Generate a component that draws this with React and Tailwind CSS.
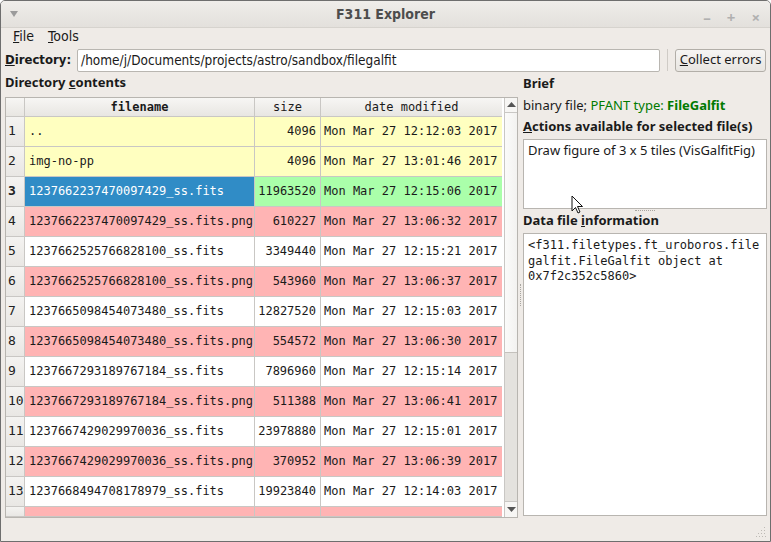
import React from 'react';

const rows = [
    { n: 1, name: '..', size: '4096', date: 'Mon Mar 27 12:12:03 2017', kind: 'dir' },
    { n: 2, name: 'img-no-pp', size: '4096', date: 'Mon Mar 27 13:01:46 2017', kind: 'dir' },
    { n: 3, name: '1237662237470097429_ss.fits', size: '11963520', date: 'Mon Mar 27 12:15:06 2017', kind: 'sel' },
    { n: 4, name: '1237662237470097429_ss.fits.png', size: '610227', date: 'Mon Mar 27 13:06:32 2017', kind: 'png' },
    { n: 5, name: '1237662525766828100_ss.fits', size: '3349440', date: 'Mon Mar 27 12:15:21 2017', kind: 'fits' },
    { n: 6, name: '1237662525766828100_ss.fits.png', size: '543960', date: 'Mon Mar 27 13:06:37 2017', kind: 'png' },
    { n: 7, name: '1237665098454073480_ss.fits', size: '12827520', date: 'Mon Mar 27 12:15:03 2017', kind: 'fits' },
    { n: 8, name: '1237665098454073480_ss.fits.png', size: '554572', date: 'Mon Mar 27 13:06:30 2017', kind: 'png' },
    { n: 9, name: '1237667293189767184_ss.fits', size: '7896960', date: 'Mon Mar 27 12:15:14 2017', kind: 'fits' },
    { n: 10, name: '1237667293189767184_ss.fits.png', size: '511388', date: 'Mon Mar 27 13:06:41 2017', kind: 'png' },
    { n: 11, name: '1237667429029970036_ss.fits', size: '23978880', date: 'Mon Mar 27 12:15:01 2017', kind: 'fits' },
    { n: 12, name: '1237667429029970036_ss.fits.png', size: '370952', date: 'Mon Mar 27 13:06:39 2017', kind: 'png' },
    { n: 13, name: '1237668494708178979_ss.fits', size: '19923840', date: 'Mon Mar 27 12:14:03 2017', kind: 'fits' },
    { n: '', name: '', size: '', date: '', kind: 'png' },
];

const bg = {
    dir: 'bg-[#ffffc0]',
    sel: 'bg-[#aaffaa]',
    png: 'bg-[#ffb4b4]',
    fits: 'bg-white',
};

const Row = ({ r, last }) => (
    <div className={`flex ${last ? 'h-[10px]' : 'h-[30px]'} border-b border-[#c9c7c4]`}>
        <div className={`w-[19px] shrink-0 flex items-center pl-[2px] border-r border-[#c9c7c4] bg-gradient-to-b from-[#f4f3f1] to-[#e9e7e4] text-[13px] text-[#222] ${r.kind === 'sel' ? 'font-bold' : ''}`}>
            {r.n}
        </div>
        <div className={`w-[230px] shrink-0 flex items-center pl-[4px] border-r border-[#c9c7c4] whitespace-pre ${r.kind === 'sel' ? 'bg-[#308cc6] text-white' : bg[r.kind]}`}>
            {r.name}
        </div>
        <div className={`w-[66px] shrink-0 flex items-center justify-end pr-[4px] border-r border-[#c9c7c4] ${bg[r.kind]}`}>
            {r.size}
        </div>
        <div className={`w-[181px] shrink-0 flex items-center pl-[3px] ${bg[r.kind]}`}>
            {r.date}
        </div>
    </div>
);

const Arrow = ({ up }) => (
    <svg width="9" height="5" viewBox="0 0 9 5">
        {up ? <path d="M0 5 L4.5 0 L9 5 Z" fill="#555" /> : <path d="M0 0 L4.5 5 L9 0 Z" fill="#555" />}
    </svg>
);

export default function App() {
    return (
        <div className="w-[771px] h-[542px] flex flex-col bg-[#efebe7] border border-[#6e6e6e] rounded-t-[5px] overflow-hidden text-[13px] text-[#1a1a1a] font-['Noto_Sans',sans-serif] relative">

            {/* title bar */}
            <div className="h-[27px] shrink-0 flex items-center relative bg-gradient-to-b from-[#efedea] to-[#e3e0dc] border-b border-[#d6d3ce]">
                <div className="absolute left-[9px] top-[10px]">
                    <svg width="8" height="6" viewBox="0 0 8 6"><path d="M0 0 L8 0 L4 6 Z" fill="#9b9b9b" /></svg>
                </div>
                <div className="flex-1 text-center font-bold text-[14px] text-[#4d4d4d] font-['DejaVu_Sans',sans-serif] font-stretch-condensed">F311 Explorer</div>
                <div className="absolute right-[10px] top-[5px] flex gap-[16px] text-[#b0b0b0] text-[15px] font-bold">
                    <span>–</span><span>+</span><span>×</span>
                </div>
            </div>

            {/* menu */}
            <div className="h-[17px] shrink-0 flex items-center gap-[14px] pl-[12px] text-[14px] font-['DejaVu_Sans',sans-serif] font-stretch-condensed">
                <span><u>F</u>ile</span>
                <span><u>T</u>ools</span>
            </div>

            {/* directory row */}
            <div className="h-[26px] mt-[2px] shrink-0 flex items-center px-[4px]">
                <span className="font-bold font-['DejaVu_Sans',sans-serif] font-stretch-condensed mr-[6px]"><u>D</u>irectory:</span>
                <div className="w-[585px] h-[23px] bg-white border border-[#b9b6b1] rounded-[2px] flex items-center pl-[3px] text-[13.5px] font-['DejaVu_Sans',sans-serif] font-stretch-condensed">
                    /home/j/Documents/projects/astro/sandbox/filegalfit
                </div>
                <div className="w-px h-[22px] bg-[#cfcbc6] ml-[7px] mr-[7px]" />
                <div className="w-[91px] h-[23px] border border-[#b2aea8] rounded-[3px] bg-gradient-to-b from-[#f6f5f3] to-[#e8e5e1] flex items-center justify-center">
                    <span><u>C</u>ollect errors</span>
                </div>
            </div>

            {/* main area */}
            <div className="flex-1 flex min-h-0 pl-[4px] pr-[3px]">
                {/* left */}
                <div className="w-[513px] shrink-0 flex flex-col">
                    <div className="h-[22px] flex items-center font-bold"><span>Directory <u>c</u>ontents</span></div>
                    <div className="mt-[4px] flex border border-[#b8b5b0] bg-white">
                        <div className="w-[496px] font-['DejaVu_Sans_Mono',monospace] text-[12px]">
                            <div className="flex h-[19px] border-b border-[#c9c7c4] bg-gradient-to-b from-[#f7f6f4] to-[#e8e6e2]">
                                <div className="w-[19px] border-r border-[#c9c7c4]" />
                                <div className="w-[230px] border-r border-[#c9c7c4] flex items-center justify-center font-bold">filename</div>
                                <div className="w-[66px] border-r border-[#c9c7c4] flex items-center justify-center">size</div>
                                <div className="w-[181px] flex items-center justify-center">date modified</div>
                            </div>
                            {rows.map((r, i) => (
                                <Row key={i} r={r} last={i === rows.length - 1} />
                            ))}
                        </div>
                        {/* scrollbar */}
                        <div className="w-[16px] ml-[2px] border-l border-[#c9c7c4] bg-[#e4e2de] flex flex-col">
                            <div className="h-[15px] flex items-center justify-center bg-[#f7f6f4] border-b border-[#c9c7c4]"><Arrow up /></div>
                            <div className="h-[240px] bg-gradient-to-r from-[#fbfbfa] to-[#f3f2f0] border-b border-[#c4c1bc]" />
                            <div className="flex-1" />
                            <div className="h-[16px] flex items-center justify-center bg-[#f7f6f4] border-t border-[#c9c7c4]"><Arrow /></div>
                        </div>
                    </div>
                </div>

                {/* splitter */}
                <div className="w-[5px] shrink-0 flex items-center justify-center">
                    <div className="h-[22px] w-px border-l border-dotted border-[#a8a5a0]" />
                </div>

                {/* right */}
                <div className="flex-1 min-w-0 flex flex-col">
                    <div className="h-[22px] flex items-center font-bold">Brief</div>
                    <div className="h-[21px] flex items-center">
                        binary file;&nbsp;<span className="text-[#007a00]">PFANT type: <b>FileGalfit</b></span>
                    </div>
                    <div className="h-[21px] flex items-center font-bold"><span><u>A</u>ctions available for selected file(s)</span></div>
                    <div className="mt-[2px] h-[70px] bg-white border border-[#b8b5b0] px-[4px] pt-[1px]">
                        Draw figure of 3 x 5 tiles (VisGalfitFig)
                    </div>
                    <div className="h-[4px] flex justify-center">
                        <div className="w-[20px] border-t border-dotted border-[#a8a5a0] mt-[1px]" />
                    </div>
                    <div className="h-[16px] flex items-center font-bold"><span>Data file <u>i</u>nformation</span></div>
                    <div className="mt-[4px] h-[283px] bg-white border border-[#b8b5b0] px-[4px] pt-[4px] font-['DejaVu_Sans_Mono',monospace] text-[12px] leading-[15.5px] break-words">
                        &lt;f311.filetypes.ft_uroboros.filegalfit.FileGalfit object at 0x7f2c352c5860&gt;
                    </div>
                </div>
            </div>

            {/* status bar */}
            <div className="h-[25px] shrink-0 relative">
                <div className="absolute right-[4px] bottom-[4px]">
                    <svg width="10" height="10" viewBox="0 0 10 10" fill="#bdbab5">
                        <rect x="8" y="0" width="1" height="1" />
                        <rect x="5" y="3" width="1" height="1" /><rect x="8" y="3" width="1" height="1" />
                        <rect x="2" y="6" width="1" height="1" /><rect x="5" y="6" width="1" height="1" /><rect x="8" y="6" width="1" height="1" />
                        <rect x="0" y="9" width="1" height="1" /><rect x="3" y="9" width="1" height="1" /><rect x="6" y="9" width="1" height="1" /><rect x="9" y="9" width="1" height="1" />
                    </svg>
                </div>
            </div>

            {/* mouse pointer */}
            <div className="absolute left-[570px] top-[194px]">
                <svg width="13" height="19" viewBox="0 0 13 19">
                    <path d="M1 1 L1 16 L4.5 12.5 L7 18 L9 17 L6.5 11.5 L11.5 11.5 Z" fill="white" stroke="#111" strokeWidth="1" strokeLinejoin="round" />
                </svg>
            </div>
        </div>
    );
}
